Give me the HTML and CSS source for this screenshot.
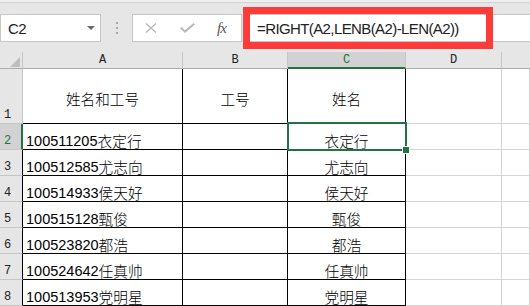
FILE: index.html
```html
<!DOCTYPE html>
<html lang="zh-CN">
<head>
<meta charset="utf-8">
<link rel="stylesheet" href="styles.css">
</head>
<body>
<div class="app">
  <div class="topline"></div>
  <div class="fbar">
    <div class="namebox"><span class="ref">C2</span><span class="caret"></span></div>
    <div class="grip"><i></i><i></i><i></i></div>
    <div class="btns">
      <svg class="ico-x" width="12" height="10" viewBox="0 0 12 10"><path d="M1 0.5 L11 9.5 M11 0.5 L1 9.5" stroke="#b8b8b8" stroke-width="1.4" fill="none"/></svg>
      <svg class="ico-ok" width="15" height="10" viewBox="0 0 15 10"><path d="M0.8 4.6 L5 8.6 L14.2 0.8" stroke="#b8b8b8" stroke-width="2" fill="none"/></svg>
      <span class="fx">fx</span>
    </div>
    <div class="formula"><span class="ftext">=RIGHT(A2,LENB(A2)-LEN(A2))</span></div>
    <div class="mark"></div>
  </div>
  <div class="sheet">
    <div class="corner"><span class="tri"></span></div>
    <div class="ch">A</div>
    <div class="ch">B</div>
    <div class="ch on">C</div>
    <div class="ch">D</div>
    <div class="ch last"></div>

    <div class="rh r1">1</div>
    <div class="c bk hd">姓名和工号</div>
    <div class="c bk hd">工号</div>
    <div class="c bk hd">姓名</div>
    <div class="c"></div>
    <div class="c"></div>

    <div class="rh on">2</div>
    <div class="c bk"><span class="n">100511205</span><span class="z">衣定行</span></div>
    <div class="c bk"></div>
    <div class="c bk mid sel"><span class="z">衣定行</span><span class="selbox"><span class="handle"></span></span></div>
    <div class="c"></div>
    <div class="c"></div>

    <div class="rh">3</div>
    <div class="c bk"><span class="n">100512585</span><span class="z">尤志向</span></div>
    <div class="c bk"></div>
    <div class="c bk mid"><span class="z">尤志向</span></div>
    <div class="c"></div>
    <div class="c"></div>

    <div class="rh">4</div>
    <div class="c bk"><span class="n">100514933</span><span class="z">侯天好</span></div>
    <div class="c bk"></div>
    <div class="c bk mid"><span class="z">侯天好</span></div>
    <div class="c"></div>
    <div class="c"></div>

    <div class="rh">5</div>
    <div class="c bk"><span class="n">100515128</span><span class="z">甄俊</span></div>
    <div class="c bk"></div>
    <div class="c bk mid"><span class="z">甄俊</span></div>
    <div class="c"></div>
    <div class="c"></div>

    <div class="rh">6</div>
    <div class="c bk"><span class="n">100523820</span><span class="z">都浩</span></div>
    <div class="c bk"></div>
    <div class="c bk mid"><span class="z">都浩</span></div>
    <div class="c"></div>
    <div class="c"></div>

    <div class="rh">7</div>
    <div class="c bk"><span class="n">100524642</span><span class="z">任真帅</span></div>
    <div class="c bk"></div>
    <div class="c bk mid"><span class="z">任真帅</span></div>
    <div class="c"></div>
    <div class="c"></div>

    <div class="rh">8</div>
    <div class="c bk"><span class="n">100513953</span><span class="z">党明星</span></div>
    <div class="c bk"></div>
    <div class="c bk mid"><span class="z">党明星</span></div>
    <div class="c"></div>
    <div class="c"></div>
  </div>
</div>
</body>
</html>
```
FILE: styles.css
```css
html, body {
  margin: 0;
  padding: 0;
  background: #e6e6e6;
}
.app {
  width: 530px;
  height: 306px;
  overflow: hidden;
  font-family: "Liberation Sans", "Noto Sans CJK SC", sans-serif;
}
.topline {
  height: 2px;
  background: #efefef;
  border-bottom: 1px solid #d2d2d2;
}
.fbar {
  position: relative;
  display: flex;
  height: 28px;
  padding: 11px 0 10px 0;
}
.namebox {
  box-sizing: border-box;
  width: 101px;
  height: 28px;
  background: #fff;
  border: 1px solid #c6c6c6;
  display: flex;
  align-items: center;
  padding: 0 5px 0 7px;
}
.ref {
  font-size: 15px;
  color: #222;
  letter-spacing: -0.6px;
}
.caret {
  margin-left: auto;
  width: 0;
  height: 0;
  border-left: 4px solid transparent;
  border-right: 4px solid transparent;
  border-top: 4px solid #6a6a6a;
}
.grip {
  width: 31px;
  display: flex;
  flex-direction: column;
  align-items: center;
  justify-content: center;
  gap: 3px;
}
.grip i {
  display: block;
  width: 2px;
  height: 2px;
  background: #a8a8a8;
}
.btns {
  box-sizing: border-box;
  width: 110px;
  height: 28px;
  background: #fff;
  border: 1px solid #c6c6c6;
  display: flex;
  align-items: center;
  padding-left: 12px;
}
.ico-x { margin-right: 23px; }
.ico-ok { margin-right: 22px; }
.fx {
  font-family: "Liberation Serif", serif;
  font-style: italic;
  font-size: 15px;
  color: #555;
  letter-spacing: -1px;
}
.formula {
  box-sizing: border-box;
  flex: 1;
  height: 28px;
  margin-left: 1px;
  margin-right: -2px;
  background: #fff;
  border: 1px solid #c6c6c6;
  display: flex;
  align-items: center;
  padding-left: 13px;
}
.ftext {
  font-size: 15px;
  color: #222;
  letter-spacing: -0.6px;
  white-space: nowrap;
}
.mark {
  position: absolute;
  left: 243px;
  top: 4px;
  width: 250px;
  height: 42px;
  box-sizing: border-box;
  border: 7px solid #fd3b3b;
}

.sheet {
  display: grid;
  grid-template-columns: 23px 160px 105px 118px 96px 1fr;
  grid-template-rows: 17px 55px repeat(7, 26px);
  background: #fff;
}
.sheet > div {
  box-sizing: border-box;
  border-right: 1px solid #d4d4d4;
  border-bottom: 1px solid #d4d4d4;
  min-width: 0;
}
.sheet > .corner {
  background: #e6e6e6;
  border-right-color: #c6c6c6;
  border-bottom-color: #ababab;
  display: flex;
  justify-content: flex-end;
  align-items: flex-end;
  padding: 0 2px 1px 0;
}
.tri {
  width: 0;
  height: 0;
  border-left: 10px solid transparent;
  border-bottom: 10px solid #bdbdbd;
}
.sheet > .ch {
  background: #e6e6e6;
  border-right-color: #c6c6c6;
  border-bottom-color: #ababab;
  font-family: "Liberation Mono", monospace;
  font-size: 12px;
  line-height: 16px;
  text-align: center;
  color: #222;
}
.sheet > .ch.on {
  background: #d2d2d2;
  color: #217346;
  border-bottom: 2px solid #217346;
}
.sheet > .ch.last {
  border-right: none;
}
.sheet > .rh {
  background: #e6e6e6;
  border-right-color: #000;
  border-bottom-color: #c6c6c6;
  font-family: "Liberation Mono", monospace;
  font-size: 12px;
  line-height: 12px;
  color: #222;
  display: flex;
  align-items: flex-end;
  padding: 0 0 2px 4px;
}
.sheet > .rh.r1 {
  border-right-color: #c6c6c6;
}
.sheet > .rh.on {
  background: #d2d2d2;
  color: #217346;
  border-right: 2px solid #217346;
}
.c {
  font-family: "Noto Sans CJK SC", sans-serif;
  font-size: 14.6px;
  font-weight: 300;
  line-height: 16px;
  color: #000;
  display: flex;
  align-items: flex-end;
  padding: 0 0 0 3px;
  white-space: nowrap;
}
.c .n {
  font-family: "Liberation Sans", Arial, sans-serif;
  font-weight: 400;
  font-size: 14.5px;
}
.c .z {
  font-family: "Noto Sans CJK SC", sans-serif;
  font-size: 14.7px;
}
.sheet > .bk {
  border-right-color: #000;
  border-bottom-color: #000;
}
.c.hd {
  align-items: center;
  justify-content: center;
  padding: 5px 0 0 0;
}
.c.mid {
  justify-content: center;
  padding: 0;
}
.sel {
  position: relative;
}
.selbox {
  position: absolute;
  left: -1px;
  top: -2px;
  right: -2px;
  bottom: -2px;
  box-sizing: border-box;
  border: 2px solid #217346;
}
.handle {
  position: absolute;
  right: -4px;
  bottom: -4px;
  width: 6px;
  height: 6px;
  background: #217346;
  box-shadow: 0 0 0 1px #fff;
}
```
